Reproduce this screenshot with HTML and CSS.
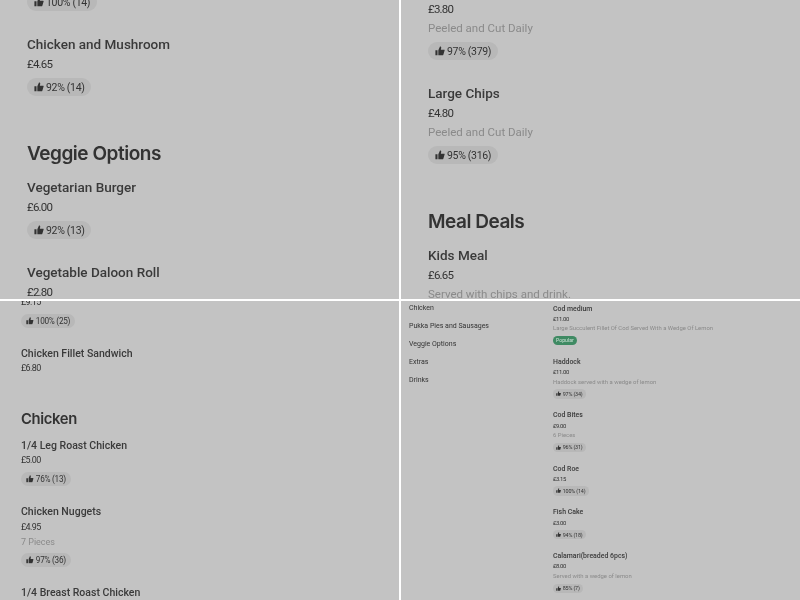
FILE: index.html
```html
<!DOCTYPE html>
<html>
<head>
	<title>Menu</title>
	<link rel="stylesheet" href="styles.css">
</head>
<body>
	<svg class="defs" width="0" height="0">
		<symbol id="thumb" viewBox="0 0 24 24"><path d="M1 10h5v12H1zM8 22V10l4-9c2 0 3 1 3 3l-1 5h8c1 0 1.500 1 1 2l-3 10c0 .5-.5 1-1 1z"/></symbol>
	</svg>
	<div class="sheet">

		<!-- top left -->
		<section class="panel large">
			<div class="menu start-a">
				<div class="item">
					<span class="rating"><svg><use href="#thumb"/></svg>100% (14)</span>
				</div>
				<div class="item">
					<div class="name">Chicken and Mushroom</div>
					<div class="price">£4.65</div>
					<span class="rating"><svg><use href="#thumb"/></svg>92% (14)</span>
				</div>
				<h2 class="heading">Veggie Options</h2>
				<div class="item">
					<div class="name">Vegetarian Burger</div>
					<div class="price">£6.00</div>
					<span class="rating"><svg><use href="#thumb"/></svg>92% (13)</span>
				</div>
				<div class="item">
					<div class="name">Vegetable Daloon Roll</div>
					<div class="price">£2.80</div>
				</div>
			</div>
		</section>

		<!-- top right -->
		<section class="panel large">
			<div class="menu start-b">
				<div class="item">
					<div class="price">£3.80</div>
					<div class="desc">Peeled and Cut Daily</div>
					<span class="rating"><svg><use href="#thumb"/></svg>97% (379)</span>
				</div>
				<div class="item">
					<div class="name">Large Chips</div>
					<div class="price">£4.80</div>
					<div class="desc">Peeled and Cut Daily</div>
					<span class="rating"><svg><use href="#thumb"/></svg>95% (316)</span>
				</div>
				<h2 class="heading">Meal Deals</h2>
				<div class="item">
					<div class="name">Kids Meal</div>
					<div class="price">£6.65</div>
					<div class="desc">Served with chips and drink.</div>
				</div>
			</div>
		</section>

		<!-- bottom left -->
		<section class="panel medium">
			<div class="menu start-c">
				<div class="item">
					<div class="price">£9.15</div>
					<span class="rating"><svg><use href="#thumb"/></svg>100% (25)</span>
				</div>
				<div class="item">
					<div class="name">Chicken Fillet Sandwich</div>
					<div class="price">£6.80</div>
				</div>
				<h2 class="heading tight">Chicken</h2>
				<div class="item">
					<div class="name">1/4 Leg Roast Chicken</div>
					<div class="price">£5.00</div>
					<span class="rating"><svg><use href="#thumb"/></svg>76% (13)</span>
				</div>
				<div class="item">
					<div class="name">Chicken Nuggets</div>
					<div class="price">£4.95</div>
					<div class="desc">7 Pieces</div>
					<span class="rating"><svg><use href="#thumb"/></svg>97% (36)</span>
				</div>
				<div class="item">
					<div class="name">1/4 Breast Roast Chicken</div>
				</div>
			</div>
		</section>

		<!-- bottom right -->
		<section class="panel small">
			<nav class="side">
				<div class="side-link">Chicken</div>
				<div class="side-link">Pukka Pies and Sausages</div>
				<div class="side-link">Veggie Options</div>
				<div class="side-link">Extras</div>
				<div class="side-link">Drinks</div>
			</nav>
			<div class="menu start-d">
				<div class="item">
					<div class="name">Cod medium</div>
					<div class="price">£11.00</div>
					<div class="desc">Large Succulent Fillet Of Cod Served With a Wedge Of Lemon</div>
					<span class="popular">Popular</span>
				</div>
				<div class="item">
					<div class="name">Haddock</div>
					<div class="price">£11.00</div>
					<div class="desc">Haddock served with a wedge of lemon</div>
					<span class="rating"><svg><use href="#thumb"/></svg>97% (34)</span>
				</div>
				<div class="item">
					<div class="name">Cod Bites</div>
					<div class="price">£9.00</div>
					<div class="desc">6 Pieces</div>
					<span class="rating"><svg><use href="#thumb"/></svg>96% (31)</span>
				</div>
				<div class="item">
					<div class="name">Cod Roe</div>
					<div class="price">£3.15</div>
					<span class="rating"><svg><use href="#thumb"/></svg>100% (14)</span>
				</div>
				<div class="item">
					<div class="name">Fish Cake</div>
					<div class="price">£3.00</div>
					<span class="rating"><svg><use href="#thumb"/></svg>94% (18)</span>
				</div>
				<div class="item">
					<div class="name">Calamari(breaded 6pcs)</div>
					<div class="price">£8.00</div>
					<div class="desc">Served with a wedge of lemon</div>
					<span class="rating"><svg><use href="#thumb"/></svg>85% (7)</span>
				</div>
			</div>
		</section>

	</div>
</body>
</html>
```
FILE: styles.css
```css
/* four shots of the same menu, each at its own scale (--u is one "design pixel") */
body {
	margin: 0;
	background: #fff;
	font-family: Roboto, "Liberation Sans", sans-serif;
	color: #333;
}

.defs {
	position: absolute;
}

.sheet {
	display: grid;
	grid-template-columns: 399px 399px;
	grid-template-rows: 299px 299px;
	gap: 2px;
	width: 800px;
	height: 600px;
	overflow: hidden;
}

.panel {
	background: #c3c3c3;
	overflow: hidden;
}

/* the shots are scaled down, so the text is a bit soft */
.menu {
	filter: blur(0.25px);
}

.large {
	--u: 1px;
	padding-left: 27px;
}

.medium {
	--u: 0.78px;
	padding-left: 21px;
}

.small {
	--u: 0.514px;
	display: flex;
	padding-left: 8px;
}

.small .menu,
.side {
	filter: blur(0.35px);
}

.start-a {
	margin-top: -11px;
}

.start-b {
	margin-top: -1px;
}

.start-c {
	margin-top: -6px;
}

.start-d {
	margin-top: 2.5px;
}

.side {
	width: 144px;
	flex: none;
	padding-top: 1px;
}

.side-link {
	height: 18px;
	line-height: 13px;
	font-size: 7px;
	font-weight: 400;
}

.item {
	margin-bottom: calc(23 * var(--u));
}

.heading {
	margin: calc(46 * var(--u)) 0 calc(11 * var(--u));
	font-family: Inter, sans-serif;
	font-size: calc(19 * var(--u));
	line-height: calc(24 * var(--u));
	font-weight: 600;
	letter-spacing: -0.025em;
}

.heading.tight {
	margin-top: calc(43 * var(--u));
}

.name {
	font-size: calc(13.5 * var(--u));
	line-height: calc(20 * var(--u));
	font-weight: 500;
	color: #3a3a3a;
}

.price {
	font-size: calc(11.5 * var(--u));
	line-height: calc(20 * var(--u));
	letter-spacing: -0.07em;
}

.desc {
	font-size: calc(11.5 * var(--u));
	line-height: calc(19 * var(--u));
	color: #8a8a8a;
}

.rating {
	display: flex;
	align-items: center;
	gap: calc(2.5 * var(--u));
	width: fit-content;
	height: calc(18 * var(--u));
	margin-top: calc(4 * var(--u));
	padding: 0 calc(6.5 * var(--u));
	border-radius: calc(9 * var(--u));
	background: #b8b8b8;
	font-size: calc(10.5 * var(--u));
	letter-spacing: -0.03em;
}

.rating svg {
	width: calc(10 * var(--u));
	height: calc(10 * var(--u));
	fill: #333;
}

.popular {
	display: block;
	width: fit-content;
	height: calc(18 * var(--u));
	margin-top: calc(4 * var(--u));
	padding: 0 calc(6 * var(--u));
	border-radius: calc(9 * var(--u));
	background: #3f8a63;
	color: #cfe3d8;
	font-size: calc(10 * var(--u));
	line-height: calc(18 * var(--u));
}
```
